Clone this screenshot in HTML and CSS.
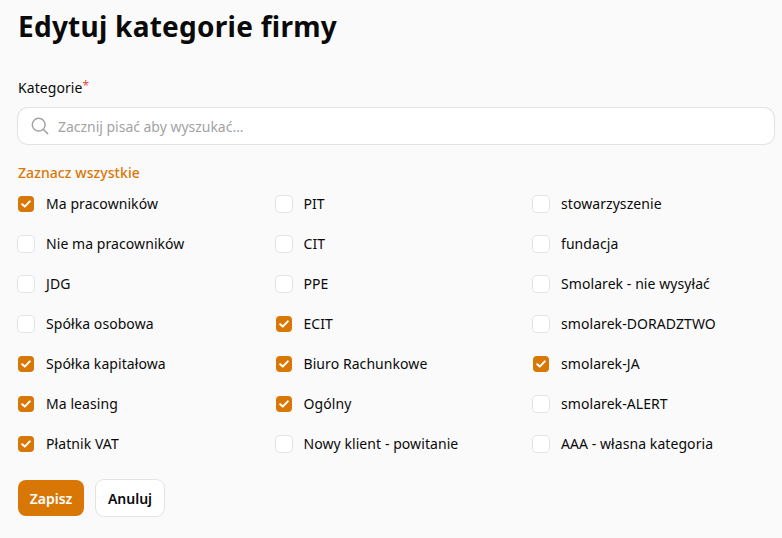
FILE: index.html
```html
<!DOCTYPE html>
<html lang="pl">
<head>
<meta charset="utf-8">
<title>Edytuj kategorie firmy</title>
<link rel="stylesheet" href="styles.css">
</head>
<body>
<main class="page">
  <h1 class="title">Edytuj kategorie firmy</h1>
  <label class="field-label">Kategorie<span class="req">*</span></label>
  <div class="search">
    <svg class="search-icon" width="18" height="18" viewBox="0 0 18 18" fill="none" stroke="#a3a3a3" stroke-width="1.5" stroke-linecap="round"><circle cx="7.7" cy="7.7" r="6.4"/><path d="M12.5 12.5L16.6 16.6"/></svg>
    <input class="search-input" type="text" placeholder="Zacznij pisać aby wyszukać...">
  </div>
  <a class="select-all">Zaznacz wszystkie</a>
  <div class="grid">
    <label class="item"><span class="box on"><svg width="10" height="8" viewBox="0 0 10 8" fill="none" stroke="#fff" stroke-width="2" stroke-linecap="round" stroke-linejoin="round"><path d="M1.2 4.2L3.8 6.6L8.8 1.4"/></svg></span>Ma pracowników</label>
    <label class="item"><span class="box"></span>PIT</label>
    <label class="item"><span class="box"></span>stowarzyszenie</label>
    <label class="item"><span class="box"></span>Nie ma pracowników</label>
    <label class="item"><span class="box"></span>CIT</label>
    <label class="item"><span class="box"></span>fundacja</label>
    <label class="item"><span class="box"></span>JDG</label>
    <label class="item"><span class="box"></span>PPE</label>
    <label class="item"><span class="box"></span>Smolarek - nie wysyłać</label>
    <label class="item"><span class="box"></span>Spółka osobowa</label>
    <label class="item"><span class="box on"><svg width="10" height="8" viewBox="0 0 10 8" fill="none" stroke="#fff" stroke-width="2" stroke-linecap="round" stroke-linejoin="round"><path d="M1.2 4.2L3.8 6.6L8.8 1.4"/></svg></span>ECIT</label>
    <label class="item"><span class="box"></span>smolarek-DORADZTWO</label>
    <label class="item"><span class="box on"><svg width="10" height="8" viewBox="0 0 10 8" fill="none" stroke="#fff" stroke-width="2" stroke-linecap="round" stroke-linejoin="round"><path d="M1.2 4.2L3.8 6.6L8.8 1.4"/></svg></span>Spółka kapitałowa</label>
    <label class="item"><span class="box on"><svg width="10" height="8" viewBox="0 0 10 8" fill="none" stroke="#fff" stroke-width="2" stroke-linecap="round" stroke-linejoin="round"><path d="M1.2 4.2L3.8 6.6L8.8 1.4"/></svg></span>Biuro Rachunkowe</label>
    <label class="item"><span class="box on"><svg width="10" height="8" viewBox="0 0 10 8" fill="none" stroke="#fff" stroke-width="2" stroke-linecap="round" stroke-linejoin="round"><path d="M1.2 4.2L3.8 6.6L8.8 1.4"/></svg></span>smolarek-JA</label>
    <label class="item"><span class="box on"><svg width="10" height="8" viewBox="0 0 10 8" fill="none" stroke="#fff" stroke-width="2" stroke-linecap="round" stroke-linejoin="round"><path d="M1.2 4.2L3.8 6.6L8.8 1.4"/></svg></span>Ma leasing</label>
    <label class="item"><span class="box on"><svg width="10" height="8" viewBox="0 0 10 8" fill="none" stroke="#fff" stroke-width="2" stroke-linecap="round" stroke-linejoin="round"><path d="M1.2 4.2L3.8 6.6L8.8 1.4"/></svg></span>Ogólny</label>
    <label class="item"><span class="box"></span>smolarek-ALERT</label>
    <label class="item"><span class="box on"><svg width="10" height="8" viewBox="0 0 10 8" fill="none" stroke="#fff" stroke-width="2" stroke-linecap="round" stroke-linejoin="round"><path d="M1.2 4.2L3.8 6.6L8.8 1.4"/></svg></span>Płatnik VAT</label>
    <label class="item"><span class="box"></span>Nowy klient - powitanie</label>
    <label class="item"><span class="box"></span>AAA - własna kategoria</label>
  </div>
  <div class="actions">
    <button class="btn primary">Zapisz</button>
    <button class="btn ghost">Anuluj</button>
  </div>
</main>
</body>
</html>
```
FILE: styles.css
```css
* { box-sizing: border-box; }
html, body { margin: 0; height: 100%; }
body {
  background: #fafafa;
  color: #0a0a0a;
  font-family: "Noto Sans", sans-serif;
  font-size: 14px;
  letter-spacing: 0.07px;
  overflow: hidden;
}
.page { display: flex; flex-direction: column; padding: 0 8px 0 18px; }
.title {
  margin: 6px 0 0 0;
  font-size: 28px;
  line-height: 40px;
  font-weight: 700;
  letter-spacing: 0.25px;
}
.field-label { margin: 32px 0 0 0; line-height: 20px; display: block; }
.req { color: #ef4444; position: relative; top: -3px; font-size: 12px; }
.search {
  margin-top: 9px;
  height: 36px;
  display: flex;
  align-items: center;
  gap: 9px;
  padding: 0 13px;
  background: #fff;
  box-shadow: 0 0 0 1px #e3e3e3;
  border-radius: 10px;
}
.search-icon { flex: none; }
.search-input {
  flex: 1;
  border: 0;
  outline: 0;
  padding: 0;
  background: transparent;
  font: inherit;
  letter-spacing: -0.02px;
  color: #0a0a0a;
}
.search-input::placeholder { color: #a3a3a3; opacity: 1; }
.select-all {
  margin: 19px 0 0 0;
  line-height: 20px;
  font-weight: 500;
  color: #d97706;
}
.grid {
  margin-top: 1px;
  display: grid;
  grid-template-columns: repeat(3, 257.5px);
  grid-auto-rows: 40px;
}
.item { display: flex; align-items: center; gap: 12px; line-height: 20px; }
.box {
  width: 16px;
  height: 16px;
  flex: none;
  display: flex;
  align-items: center;
  justify-content: center;
  background: #fff;
  box-shadow: 0 0 0 1px #e3e3e3;
  border-radius: 4px;
}
.box.on { background: #d97706; box-shadow: none; }
.actions { display: flex; gap: 12px; margin: 16px 0 0 0; }
.btn {
  height: 36px;
  width: 66px;
  padding: 0;
  border: 0;
  border-radius: 8px;
  font: inherit;
  letter-spacing: 0;
  font-weight: 600;
}
.primary { background: #d97706; color: #fff; }
.ghost { width: 68px; background: #fff; color: #0a0a0a; box-shadow: 0 0 0 1px #e3e3e3; }
```
